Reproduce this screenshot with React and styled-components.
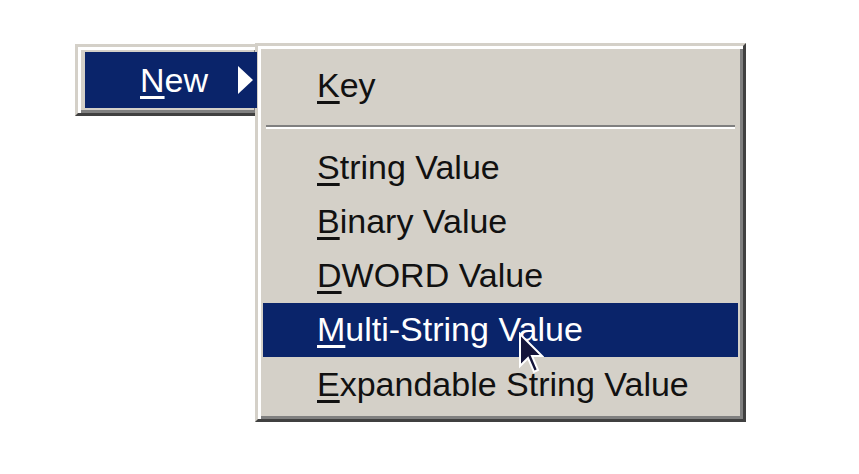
import React from "react";
import styled, { createGlobalStyle } from "styled-components";

const Global = createGlobalStyle`
  html, body {
    margin: 0;
    background: #ffffff;
  }
  body {
    font-family: "Liberation Sans", Arial, sans-serif;
  }
`;

const Page = styled.div`
  display: flex;
  align-items: flex-start;
  padding: 43px 0 0 75px;
  height: 474px;
  box-sizing: border-box;
`;

const Menu = styled.div`
  box-sizing: border-box;
  background: #d4d0c8;
  border: 3px solid;
  border-color: #d4d0c8 #404040 #404040 #d4d0c8;
  box-shadow: inset 3px 3px 0 #ffffff, inset -3px -3px 0 #808080;
`;

const ParentMenu = styled(Menu)`
  margin-top: 1px;
  width: 185px;
  padding: 5px 0 5px 7px;
`;

const SubMenu = styled(Menu)`
  width: 491px;
  margin-left: -5px;
  padding: 12px 5px 8px 5px;
`;

const Item = styled.div`
  position: relative;
  display: flex;
  align-items: center;
  height: ${(p) => p.$h || 54.2}px;
  padding-left: ${(p) => p.$pad || 54}px;
  font-size: 34px;
  color: ${(p) => (p.$active ? "#ffffff" : "#111111")};
  background: ${(p) => (p.$active ? "#0a246a" : "transparent")};
  white-space: nowrap;
`;

const Key = styled.span`
  text-decoration: underline;
  text-decoration-thickness: 3px;
  text-underline-offset: 4px;
`;

const Arrow = styled.span`
  margin-left: 30px;
  width: 0;
  height: 0;
  border-left: 15px solid #ffffff;
  border-top: 14px solid transparent;
  border-bottom: 14px solid transparent;
`;

const Separator = styled.div`
  height: 28px;
  display: flex;
  align-items: center;
  padding: 0 3px;
  &::before {
    content: "";
    flex: 1;
    height: 0;
    border-top: 2px solid #808080;
    border-bottom: 2px solid #ffffff;
    margin-top: 1px;
  }
`;

const Cursor = styled.svg`
  position: absolute;
  left: 255px;
  top: 29px;
  width: 26px;
  height: 42px;
`;

const entries = [
  ["S", "tring Value"],
  ["B", "inary Value"],
  ["D", "WORD Value"],
  ["M", "ulti-String Value"],
  ["E", "xpandable String Value"],
];

export default function App() {
  return (
    <>
      <Global />
      <Page>
        <ParentMenu>
          <Item $active $h={56} $pad={55}>
            <Key>N</Key>ew
            <Arrow />
          </Item>
        </ParentMenu>
        <SubMenu>
          <Item>
            <Key>K</Key>ey
          </Item>
          <Separator />
          {entries.map(([k, rest]) => (
            <Item key={k} $active={k === "M"}>
              <Key>{k}</Key>
              {rest}
              {k === "M" && (
                <Cursor viewBox="0 0 13 21">
                  <path
                    d="M1 1 L1 17 L5 13 L8 20 L10 19 L7 12 L12 12 Z"
                    fill="#15153a"
                    stroke="#ffffff"
                    strokeWidth="1"
                  />
                </Cursor>
              )}
            </Item>
          ))}
        </SubMenu>
      </Page>
    </>
  );
}
